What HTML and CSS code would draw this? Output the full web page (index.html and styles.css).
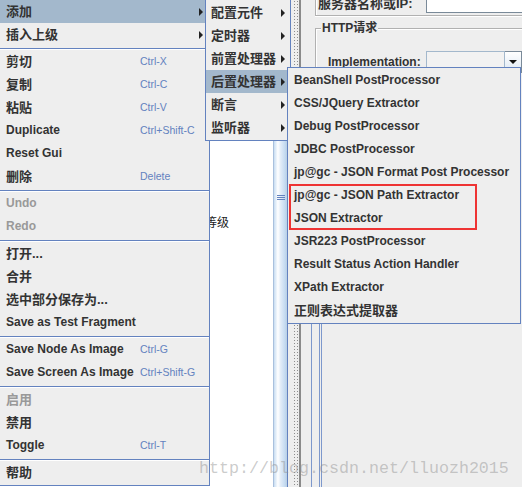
FILE: index.html
```html
<!DOCTYPE html>
<html>
<head>
<meta charset="utf-8">
<link rel="stylesheet" href="styles.css">
</head>
<body>
<div class="app">
  <div class="tree"><span class="tree-text">等级</span></div>
  <div class="vscroll"><div class="thumb"><div class="grip"></div></div></div>
  <div class="splitter"><div class="split-gap"></div><div class="split-dots"></div><div class="split-edge"></div></div>
  <div class="right">
    <div class="server">
      <span class="srv-label">服务器名称或IP:</span>
      <span class="srv-input"></span>
    </div>
    <div class="http">
      <span class="legend">HTTP请求</span>
      <div class="impl-row">
        <span class="impl-label">Implementation:</span>
        <div class="combo"><span class="combo-field"></span><span class="combo-btn"><i class="down"></i></span></div>
      </div>
    </div>
    <div class="lower"><div class="lower-2"><div class="lower-3"></div></div></div>
  </div>
</div>

<div class="menu m-main">
  <div class="item zh sel"><span class="label">添加</span><i class="arrow"></i></div>
  <div class="item zh"><span class="label">插入上级</span><i class="arrow"></i></div>
  <div class="sep"></div>
  <div class="item zh"><span class="label">剪切</span><span class="key">Ctrl-X</span></div>
  <div class="item zh"><span class="label">复制</span><span class="key">Ctrl-C</span></div>
  <div class="item zh"><span class="label">粘贴</span><span class="key">Ctrl-V</span></div>
  <div class="item"><span class="label">Duplicate</span><span class="key">Ctrl+Shift-C</span></div>
  <div class="item"><span class="label">Reset Gui</span></div>
  <div class="item zh"><span class="label">删除</span><span class="key">Delete</span></div>
  <div class="sep"></div>
  <div class="item dis"><span class="label">Undo</span></div>
  <div class="item dis"><span class="label">Redo</span></div>
  <div class="sep"></div>
  <div class="item zh"><span class="label">打开...</span></div>
  <div class="item zh"><span class="label">合并</span></div>
  <div class="item zh"><span class="label">选中部分保存为...</span></div>
  <div class="item"><span class="label">Save as Test Fragment</span></div>
  <div class="sep"></div>
  <div class="item"><span class="label">Save Node As Image</span><span class="key">Ctrl-G</span></div>
  <div class="item"><span class="label">Save Screen As Image</span><span class="key">Ctrl+Shift-G</span></div>
  <div class="sep"></div>
  <div class="item zh dis"><span class="label">启用</span></div>
  <div class="item zh"><span class="label">禁用</span></div>
  <div class="item"><span class="label">Toggle</span><span class="key">Ctrl-T</span></div>
  <div class="sep"></div>
  <div class="item zh"><span class="label">帮助</span></div>
</div>

<div class="menu m-sub1">
  <div class="item zh"><span>配置元件</span><i class="arrow"></i></div>
  <div class="item zh"><span>定时器</span><i class="arrow"></i></div>
  <div class="item zh"><span>前置处理器</span><i class="arrow"></i></div>
  <div class="item zh sel"><span>后置处理器</span><i class="arrow"></i></div>
  <div class="item zh"><span>断言</span><i class="arrow"></i></div>
  <div class="item zh"><span>监听器</span><i class="arrow"></i></div>
</div>

<div class="menu m-sub2">
  <div class="item">BeanShell PostProcessor</div>
  <div class="item">CSS/JQuery Extractor</div>
  <div class="item">Debug PostProcessor</div>
  <div class="item">JDBC PostProcessor</div>
  <div class="item">jp@gc - JSON Format Post Processor</div>
  <div class="item">jp@gc - JSON Path Extractor</div>
  <div class="item">JSON Extractor</div>
  <div class="item">JSR223 PostProcessor</div>
  <div class="item">Result Status Action Handler</div>
  <div class="item">XPath Extractor</div>
  <div class="item zh">正则表达式提取器</div>
</div>

<div class="highlight-box"></div>
<div class="watermark">http://blog.csdn.net/lluozh2015</div>
</body>
</html>
```

FILE: styles.css
```css
* { box-sizing: border-box; }
html, body { margin: 0; padding: 0; }
body {
  width: 522px;
  height: 487px;
  overflow: hidden;
  position: relative;
  font-family: "Liberation Sans", "Noto Sans CJK SC", sans-serif;
  font-size: 12px;
  color: #333;
  background: #eee;
}

.app { display: flex; width: 522px; height: 487px; }

.tree {
  flex: 0 0 273px;
  background: #fff;
  padding: 216px 0 0 205px;
  font-size: 12px;
  line-height: 14px;
  color: #222;
  white-space: nowrap;
  overflow: hidden;
}

.vscroll { flex: 0 0 15px; display: flex; }
.thumb {
  flex: 1;
  border-left: 1px solid #a9c0dd;
  border-right: 1px solid #6382bf;
  background: linear-gradient(to right, #c8ddf2, #ffffff 30%, #e3edf8 50%, #c8ddf2 80%, #b8cfe5);
  padding: 195px 0 0 3px;
}
.grip {
  width: 8px;
  height: 5px;
  background: repeating-linear-gradient(to bottom, #6382bf 0 1px, transparent 1px 2px);
}

.splitter { flex: 0 0 13px; display: flex; }
.split-gap { width: 5px; }
.split-dots {
  width: 6px;
  background-image: radial-gradient(circle, #8d8d8d 0.7px, transparent 1px);
  background-size: 3px 3px;
}
.split-edge { width: 2px; background: #8a8a8a; }

.right { flex: 1; min-width: 0; display: flex; flex-direction: column; overflow: hidden; }

.server {
  flex: 0 0 auto;
  margin: -20px 0 0 14px;
  height: 36px;
  border-left: 1px solid #b1b1b1;
  border-bottom: 1px solid #b1b1b1;
  box-shadow: inset 1px 0 #fff, 0 1px #fff;
  display: flex;
  align-items: flex-end;
  padding: 0 0 2px 2px;
}
.srv-label {
  flex: 0 0 108px;
  font-weight: bold;
  font-size: 13px;
  line-height: 16px;
  margin-bottom: 1px;
  white-space: nowrap;
}
.srv-input {
  flex: 1;
  height: 20px;
  margin-right: -6px;
  background: #fff;
  border: 1px solid #7a8a99;
}

.http {
  flex: 0 0 auto;
  position: relative;
  margin: 12px 0 0 14px;
  height: 290px;
  border-top: 1px solid #b1b1b1;
  border-left: 1px solid #b1b1b1;
  box-shadow: inset 1px 1px #fff;
  padding: 22px 0 0 12px;
}
.legend {
  position: absolute;
  top: -8px;
  left: 5px;
  padding: 0 1px;
  background: #eee;
  font-weight: bold;
  font-size: 12px;
  line-height: 15px;
  white-space: nowrap;
}
.impl-row { display: flex; align-items: center; height: 22px; }
.impl-label { flex: 0 0 98px; font-weight: bold; white-space: nowrap; }
.combo { flex: 1; display: flex; height: 22px; }
.combo-field { flex: 0 0 79px; border: 1px solid #a3b8cc; background: #f2f2f2; }
.combo-btn {
  flex: 1;
  border: 1px solid #7a8a99;
  border-left: none;
  background: linear-gradient(to bottom, #ffffff, #dde8f3);
  display: flex;
  align-items: center;
  justify-content: center;
}
.down {
  width: 0; height: 0;
  border-top: 4px solid #111;
  border-left: 4px solid transparent;
  border-right: 4px solid transparent;
}

.lower { flex: 1; margin-left: 10px; border-left: 1px solid #7d98cc; display: flex; }
.lower-2 { flex: 1; margin-left: 7px; border-left: 1px solid #7d98cc; display: flex; }
.lower-3 { flex: 1; margin-left: 1px; border-left: 1px solid #7d98cc; }

/* popup menus */
.menu {
  position: absolute;
  background: #eee;
  border: 1px solid #6382bf;
  padding: 1px 0;
  z-index: 2;
}
.m-main { left: -1px; top: -2px; width: 211px; }
.m-sub1 { left: 205px; top: -1px; width: 86px; z-index: 3; }
.m-sub2 { left: 287px; top: 67px; width: 234px; z-index: 4; }

.item {
  height: 23px;
  line-height: 23px;
  display: flex;
  align-items: center;
  padding: 0 6px;
  font-weight: bold;
  white-space: nowrap;
  color: #333;
}
.m-sub1 .item { padding: 0 5px; }
.item.zh { font-size: 13px; }
.item.sel { background: #a3b8cc; }
.item.dis { color: #999; }
.label { flex: 0 0 134px; }
.key { font-weight: normal; font-size: 10.5px; color: #6382bf; }
.arrow {
  margin-left: auto;
  width: 0; height: 0;
  border-left: 4px solid #222;
  border-top: 4px solid transparent;
  border-bottom: 4px solid transparent;
}
.sep {
  margin-top: 2px;
  border-top: 1px solid #6382bf;
  border-bottom: 1px solid #fff;
}

.highlight-box {
  position: absolute;
  left: 289px;
  top: 184px;
  width: 188px;
  height: 46px;
  border: 2px solid #ee3333;
  z-index: 5;
}

.watermark {
  position: absolute;
  left: 199px;
  top: 459px;
  font-family: "Liberation Mono", monospace;
  font-size: 16.67px;
  line-height: 20px;
  color: rgba(140, 140, 140, 0.45);
  white-space: nowrap;
  z-index: 6;
}
```
